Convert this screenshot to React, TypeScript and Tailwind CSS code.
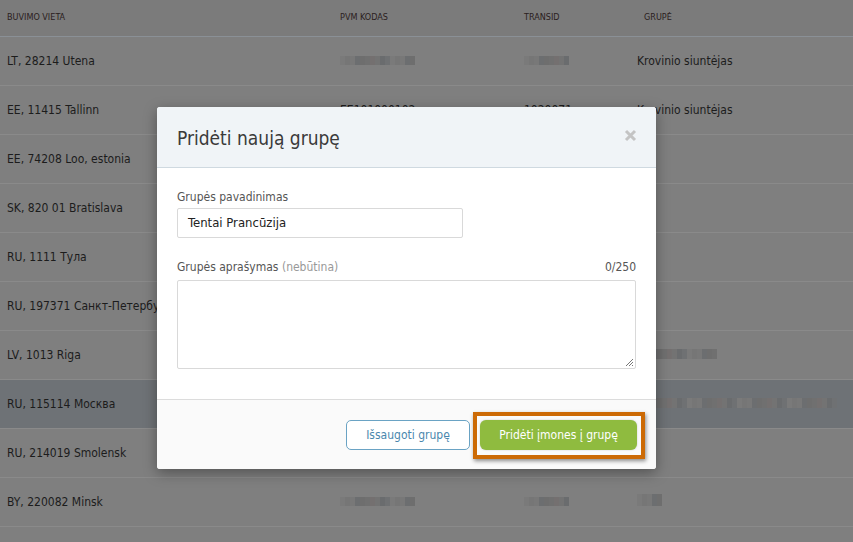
import React from "react";

const rows = [
  { loc: "LT, 28214 Utena", pvm: "blur", trans: "blur", grp: "Krovinio siuntėjas" },
  { loc: "EE, 11415 Tallinn", pvm: "EE101000102", trans: "1020071", grp: "Krovinio siuntėjas" },
  { loc: "EE, 74208 Loo, estonia", pvm: "", trans: "", grp: "" },
  { loc: "SK, 820 01 Bratislava", pvm: "", trans: "", grp: "" },
  { loc: "RU, 1111 Тула", pvm: "", trans: "", grp: "" },
  { loc: "RU, 197371 Санкт-Петербург", pvm: "", trans: "", grp: "" },
  { loc: "LV, 1013 Riga", pvm: "", trans: "", grp: "blurA" },
  { loc: "RU, 115114 Москва", pvm: "", trans: "", grp: "blurB", hl: true },
  { loc: "RU, 214019 Smolensk", pvm: "", trans: "", grp: "" },
  { loc: "BY, 220082 Minsk", pvm: "blur", trans: "blur", grp: "blurC" },
  { loc: "", pvm: "", trans: "", grp: "" },
];

const pal = ["#767676", "#6e6e6e", "#737373", "#7a7a7a", "#6c6e70", "#747070", "#6f7173", "#787878", "#707070", "#6a6c6e"];

function Blur({ n, h = 9 }: { n: number; h?: number }) {
  return (
    <span className="inline-flex">
      {Array.from({ length: n }).map((_, i) => (
        <span key={i} className="inline-block w-[5px]" style={{ height: h, background: pal[(i * 7 + 3) % pal.length] }} />
      ))}
    </span>
  );
}

export default function App() {
  const font = { fontFamily: '"DejaVu Sans", "Liberation Sans", sans-serif', fontStretch: "condensed" as const };
  return (
    <div className="relative w-[853px] h-[542px] overflow-hidden bg-[#808080]" style={font}>
      {/* table */}
      <div className="flex flex-col">
        <div className="flex h-[37px] items-center bg-[#7b7b7b] border-b border-[#8a9096] text-[9px] text-[#2a2020] uppercase">
          <div className="w-[333px] pl-[7px]">Buvimo vieta</div>
          <div className="w-[184px] pl-[7px]">PVM kodas</div>
          <div className="w-[120px] pl-[7px]">Transid</div>
          <div className="flex-1 pl-[7px]">Grupė</div>
        </div>
        {rows.map((r, i) => (
          <div
            key={i}
            className={`flex h-[49px] shrink-0 items-center border-b border-[#8a8a8a] text-[12px] text-[#1c1c1c] ${r.hl ? "bg-[#6e7276]" : "bg-[#7f7f7f]"}`}
          >
            <div className="w-[333px] pl-[7px] whitespace-nowrap">{r.loc}</div>
            <div className="w-[184px] pl-[7px]">
              {r.pvm === "blur" ? <Blur n={15} /> : r.pvm}
            </div>
            <div className="w-[120px] pl-[7px]">
              {r.trans === "blur" ? <Blur n={9} /> : r.trans}
            </div>
            <div className="flex-1 whitespace-nowrap">
              {r.grp === "blurA" ? <Blur n={16} h={10} /> : r.grp === "blurB" ? <Blur n={40} h={10} /> : r.grp === "blurC" ? <Blur n={5} h={12} /> : r.grp}
            </div>
          </div>
        ))}
      </div>

      {/* modal */}
      <div className="absolute left-[157px] top-[107px] w-[499px] rounded-[3px] bg-white shadow-[0_4px_14px_rgba(0,0,0,0.35)] overflow-visible">
        <div className="flex h-[61px] items-center justify-between rounded-t-[3px] border-b border-[#cfd9e0] bg-[#f0f4f7] pl-[20px] pr-[19px]">
          <div className="text-[19px] text-[#3a3a3a] pt-[2px]">Pridėti naują grupę</div>
          <svg width="13" height="13" viewBox="0 0 13 13" className="mt-[-4px]">
            <path d="M2 2 L11 11 M11 2 L2 11" stroke="#c4c4c4" strokeWidth="3" strokeLinecap="butt" />
          </svg>
        </div>
        <div className="px-[20px] pt-[20px] pb-[30px]">
          <div className="text-[12px] text-[#555]">Grupės pavadinimas</div>
          <div className="mt-[2px] flex h-[30px] w-[286px] items-center rounded-[2px] border border-[#d9d9d9] pl-[10px] text-[13px] text-[#222]">
            Tentai Prancūzija
          </div>
          <div className="mt-[20px] flex items-baseline justify-between text-[12px] text-[#555]">
            <div>
              Grupės aprašymas <span className="text-[#999]">(nebūtina)</span>
            </div>
            <div>0/250</div>
          </div>
          <div className="relative mt-[4px] h-[89px] w-full rounded-[2px] border border-[#d9d9d9]">
            <svg width="9" height="9" viewBox="0 0 9 9" className="absolute right-[1px] bottom-[1px]">
              <path d="M8 1 L1 8 M8 4 L4 8 M8 7 L7 8" stroke="#777" strokeWidth="1" />
            </svg>
          </div>
        </div>
        <div className="flex h-[70px] items-center justify-end gap-[10px] rounded-b-[3px] border-t border-[#dcdcdc] bg-[#fafafa] pr-[19px]">
          <div className="flex h-[30px] w-[124px] items-center justify-center rounded-[5px] border border-[#6aa3c4] bg-white text-[12px] text-[#4a87ad]">
            Išsaugoti grupę
          </div>
          <div className="relative">
            <div className="absolute -left-[7px] -top-[8px] -right-[8px] -bottom-[9px] border-[4px] border-[#cc6a05] shadow-[1px_2px_4px_rgba(0,0,0,0.45)]" />
            <div className="flex h-[30px] w-[157px] items-center justify-center rounded-[6px] bg-[#8fbb3f] text-[12px] font-medium text-white shadow-[0_0_2px_rgba(0,0,0,0.2)]">
              Pridėti įmones į grupę
            </div>
          </div>
        </div>
      </div>
    </div>
  );
}
